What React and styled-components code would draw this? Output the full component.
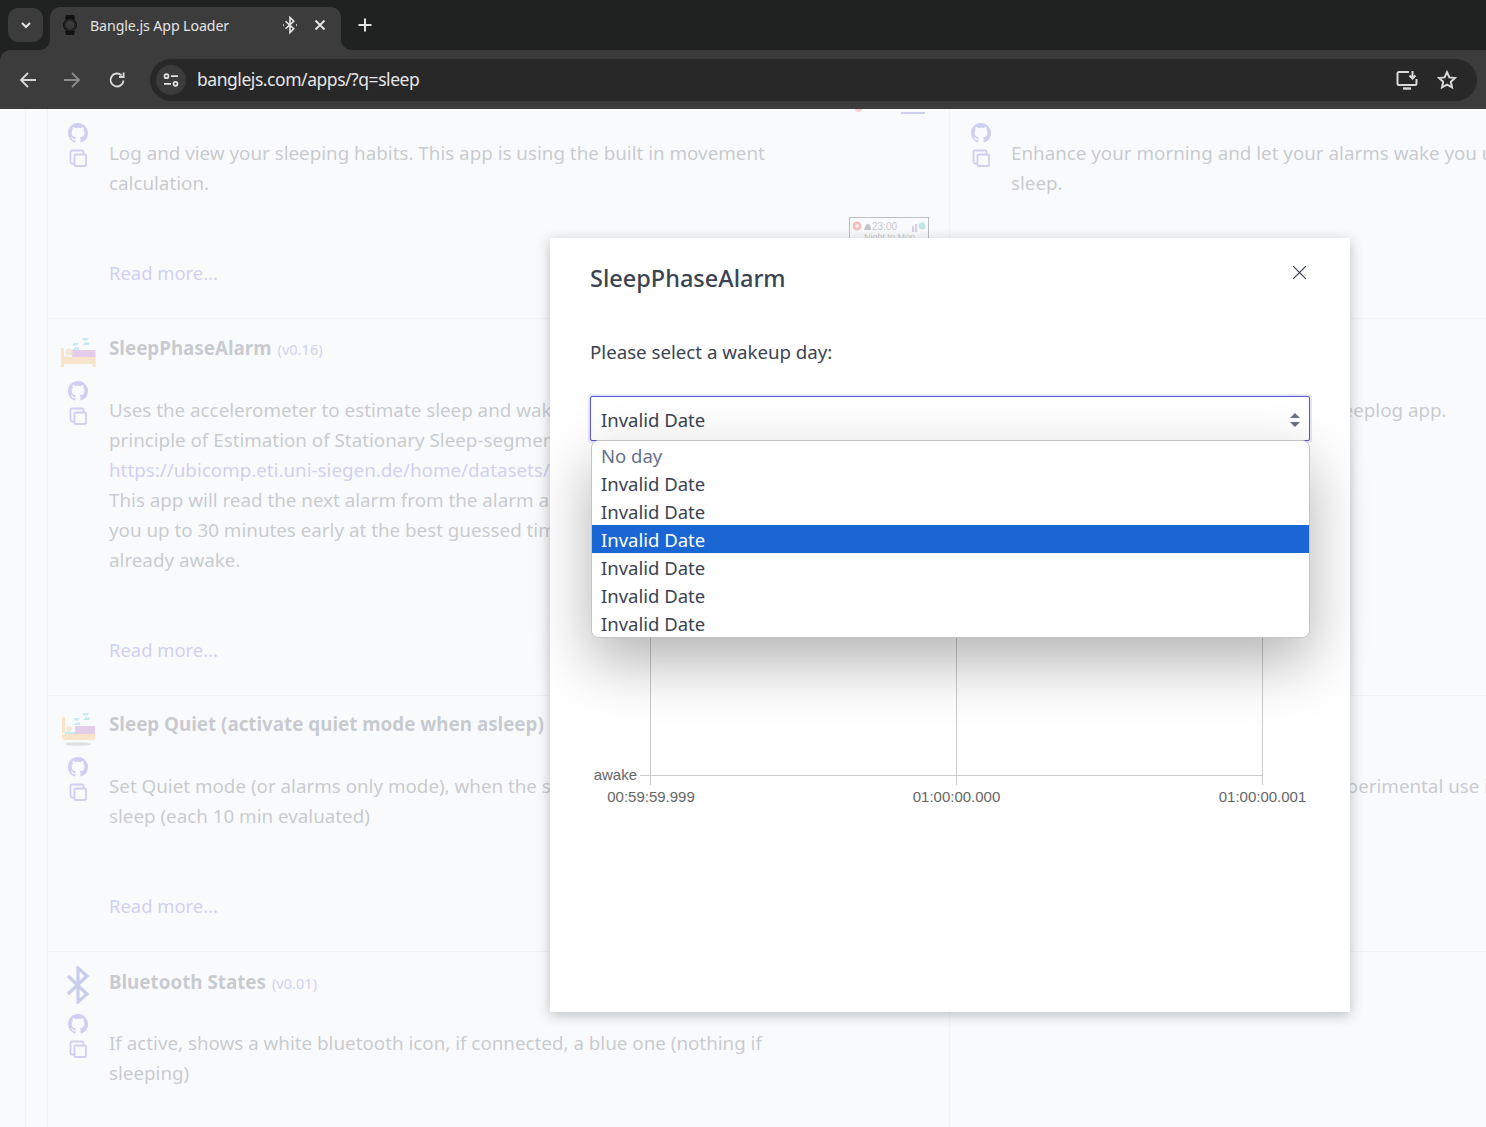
import React from "react";
import styled, { createGlobalStyle } from "styled-components";

const Global = createGlobalStyle`
  html, body { margin: 0; padding: 0; height: 100%; overflow: hidden; background: #fff; }
  * { box-sizing: border-box; }
`;
const Shell = styled.div`
  width: 1486px; height: 1127px; display: flex; flex-direction: column; overflow: hidden; position: relative;
  font-family: "Noto Sans", "Open Sans", sans-serif; color: #3b4351; background: #202222;
`;
const TabStrip = styled.div`
  height: 50px; background: #202222; display: flex; align-items: flex-end; padding-left: 8px; flex: none;
`;
const TabSearch = styled.button`
  width: 35px; height: 34px; margin: 0 7px 8px 0; border: 0; border-radius: 10px; background: #3c3c3c; color: #e6e6e6;
  display: flex; align-items: center; justify-content: center; padding: 0;
`;
const Tab = styled.div`
  position: relative; width: 291px; height: 43px; background: #3c3c3c; border-radius: 10px 10px 0 0; display: flex; align-items: center;
  padding: 0 15px 8px 12px; color: #e3e3e3; font-size: 14.2px;
  &::before, &::after { content: ""; position: absolute; bottom: 0; width: 10px; height: 10px; }
  &::before { right: 100%; background: radial-gradient(circle at 0 0, transparent 9.5px, #3c3c3c 10px); }
  &::after { left: 100%; background: radial-gradient(circle at 100% 0, transparent 9.5px, #3c3c3c 10px); }
`;
const TabTitle = styled.span`
  margin-left: 12px; padding-top: 2px; flex: 1; white-space: nowrap; letter-spacing: -0.1px;
`;
const TabAction = styled.span`
  display: flex; margin-left: ${p => p.$gap || 0}px;
`;
const NewTab = styled.span`
  margin: 0 0 8px 17px; display: flex; height: 34px; align-items: center; color: #e3e3e3;
`;
const Toolbar = styled.div`
  height: 59px; background: #3c3c3c; display: flex; align-items: center; padding: 0 9px 0 16px; flex: none;
  border-radius: 10px 0 0 0;
`;
const NavBtn = styled.span`
  width: 24px; height: 24px; display: flex; align-items: center; justify-content: center; margin-right: ${p => p.$mr}px; color: ${p => p.$dim ? "#8a8a8a" : "#d9d9d9"};
`;
const Omnibox = styled.div`
  flex: 1; height: 42px; border-radius: 21px; background: #282828; display: flex; align-items: center; padding: 0 20px 0 6px; margin-left: 21px;
`;
const SiteChip = styled.span`
  width: 30px; height: 30px; border-radius: 50%; background: #3c3c3c; display: flex; align-items: center; justify-content: center; color: #e3e3e3;
`;
const Url = styled.span`
  margin-left: 11px; padding-bottom: 2px; flex: 1; font-size: 17.5px; color: #e6e6e6; letter-spacing: -0.45px;
`;
const OmniIcon = styled.span`
  display: flex; color: #d9d9d9; margin-left: ${p => p.$ml || 0}px;
`;

const Page = styled.div`
  flex: 1; min-height: 0; background: #fff; overflow: hidden; padding-left: 25px; position: relative;
`;
const Rail = styled.div`
  border-left: 1px solid #dadee4; padding-left: 21px; height: 100%;
`;
const Grid = styled.div`
  width: 1600px; display: grid; grid-template-columns: 902px 1fr; border-left: 1px solid #dadee4;
`;
const Cell = styled.div`
  height: ${p => p.$h}px; border-bottom: 1px solid #dadee4; border-right: ${p => p.$end ? "none" : "1px solid #dadee4"};
  display: flex; padding: ${p => p.$top}px 0 0 ${p => p.$end ? 13 : 12}px; overflow: hidden;
`;
const IconCol = styled.div`
  width: 36px; flex: none; display: flex; flex-direction: column; align-items: center; color: #5755d9;
`;
const AppIcon = styled.span`
  height: 36px; margin-bottom: ${p => p.$mb || 10}px; display: flex; align-items: center; justify-content: center; color: ${p => p.$color || "inherit"};
`;
const IconLine = styled.span`
  display: flex; height: 24px; align-items: center; margin-top: ${p => p.$mt || 0}px;
`;
const Body = styled.div`
  margin-left: ${p => p.$ml || 13}px; font-size: 18.8px; line-height: 30px; flex: 1; white-space: nowrap;
`;
const Title = styled.div`
  font-weight: 700; font-size: 18.8px; line-height: 30px; height: 32px; margin-bottom: ${p => p.$mb || 30}px;
`;
const Version = styled.span`
  font-weight: 400; font-size: 14.6px; color: #5755d9; margin-left: 6px;
`;
const Desc = styled.div`
  height: ${p => p.$h}px; margin-top: ${p => p.$mt || 0}px;
`;
const Link = styled.span`
  color: #5755d9;
`;
const ReadMore = styled.span`
  color: #5755d9; font-size: 18.4px;
`;
const Overlay = styled.div`
  position: absolute; inset: 109px 0 0 0; background: rgba(247, 248, 249, 0.75);
`;
const Thumb = styled.div`
  position: absolute; left: 849px; top: 108px; width: 80px; height: 40px; border: 1px solid #111; background: #fff; color: #111;
  overflow: hidden;
`;
const ThumbArt = styled.svg`
  display: block; width: 78px; height: 38px; font-family: "Liberation Sans", sans-serif; font-size: 10px;
`;
const TopMark = styled.div`
  position: absolute; left: 901px; top: 3px; width: 24px; height: 2px; background: #5755d9;
`;
const TopDot = styled.div`
  position: absolute; left: 855px; top: -3px; width: 7px; height: 6px; border-radius: 50%; background: #e85a5a;
`;

const Modal = styled.div`
  position: absolute; left: 550px; top: 238px; width: 800px; height: 774px; background: #fff; box-shadow: 0 3px 12px rgba(48,55,66,.3);
  padding: 20px 40px 0;
`;
const ModalHead = styled.div`
  display: flex; justify-content: space-between; align-items: flex-start; height: 75px;
`;
const ModalTitle = styled.h2`
  margin: 0; font-size: 23.5px; line-height: 40px; font-weight: 500; color: #3b4351;
`;
const CloseBtn = styled.span`
  display: flex; color: #3b4351; margin: 5.5px 2.5px 0 0;
`;
const Prompt = styled.div`
  font-size: 18.7px; line-height: 28px; margin-top: 5px;
`;
const SelectBox = styled.div`
  margin-top: 30px; height: 45px; border: 1px solid #5755d9; box-shadow: 0 0 0 2px rgba(87,85,217,.15); border-radius: 2px;
  display: flex; align-items: center; justify-content: space-between; padding: 2px 8px 0 10px; font-size: 18.5px; background: #fff;
`;
const Popup = styled.div`
  position: absolute; left: 41px; top: 202px; width: 719px; height: 198px; background: #fff; border: 1px solid #c4c4c4; border-radius: 8px;
  box-shadow: 0 24px 60px 0 rgba(0,0,0,.3); overflow: hidden;
`;
const Option = styled.div`
  height: 28px; line-height: 30px; padding-left: 9px; font-size: 18.5px;
  background: ${p => p.$active ? "#1a66d4" : "#fff"}; color: ${p => p.$active ? "#fff" : p.$muted ? "#667189" : "#3b4351"};
`;
const Chart = styled.svg`
  position: absolute; left: 0; top: 0; width: 800px; height: 774px;
  font-family: "Liberation Sans", Arial, sans-serif; font-size: 15px; fill: #666;
`;

const ChevronDown = () => <svg width="14" height="14" viewBox="0 0 14 14" fill="none" stroke="currentColor" strokeWidth="2"><path d="M3 5l4 4 4-4" /></svg>;
const Watch = () => (
  <svg width="16" height="22" viewBox="0 0 16 22"><path d="M4 1h8l1 4H3zM3 17h10l-1 4H4z" fill="#111"/><circle cx="8" cy="11" r="6.5" fill="#222" stroke="#111"/><circle cx="8" cy="11" r="4.4" fill="#3a3a3a"/></svg>
);
const BT = ({ w = 24, h = 38, sw = 3.2 }) => (
  <svg width={w} height={h} viewBox="0 0 24 38" fill="none" stroke="currentColor" strokeWidth={sw}><path d="M2 10l19 18-9 8V2l9 8L2 28"/></svg>
);
const BTTab = () => (
  <svg width="18" height="18" viewBox="0 0 24 24" fill="none" stroke="#e3e3e3" strokeWidth="2.2"><path d="M6 7l11 10-5 5V2l5 5L6 17"/><path d="M3 12h1M20 12h1" strokeWidth="3"/></svg>
);
const XIcon = ({ size = 12, sw = 1.9 }) => <svg width={size} height={size} viewBox="0 0 12 12" fill="none" stroke="currentColor" strokeWidth={sw}><path d="M1.5 1.5l9 9M10.5 1.5l-9 9"/></svg>;
const Plus = () => <svg width="14" height="14" viewBox="0 0 14 14" fill="none" stroke="currentColor" strokeWidth="2"><path d="M7 .5v13M.5 7h13"/></svg>;
const Back = () => <svg width="18" height="18" viewBox="0 0 18 18" fill="none" stroke="currentColor" strokeWidth="1.9"><path d="M17 9H2M9 2L2 9l7 7"/></svg>;
const Fwd = () => <svg width="18" height="18" viewBox="0 0 18 18" fill="none" stroke="currentColor" strokeWidth="1.9"><path d="M1 9h15M9 2l7 7-7 7"/></svg>;
const Reload = () => <svg width="18" height="18" viewBox="0 0 18 18" fill="none" stroke="currentColor" strokeWidth="1.9"><path d="M15.5 9.5A6.5 6.5 0 1 1 13.6 4.4"/><path d="M15.6 1.4V6H11" /></svg>;
const Tune = () => (
  <svg width="16" height="14" viewBox="0 0 16 14" fill="none" stroke="currentColor" strokeWidth="1.7">
    <circle cx="3.5" cy="3.2" r="2" />
    <path d="M8 3.2h7M1 10.8h7" />
    <circle cx="12.5" cy="10.8" r="2" />
  </svg>
);
const Install = () => <svg width="22" height="20" viewBox="0 0 22 20" fill="none" stroke="currentColor" strokeWidth="2"><path d="M13 2H3a1.5 1.5 0 0 0-1.5 1.5v10A1.5 1.5 0 0 0 3 15h16a1.5 1.5 0 0 0 1.5-1.5V9"/><path d="M7 18.5h8" strokeWidth="2.4"/><path d="M16.5 1v7M13.5 5.5l3 3 3-3"/></svg>;
const Star = () => <svg width="20" height="20" viewBox="0 0 20 20" fill="none" stroke="currentColor" strokeWidth="2"><path d="M10 2.2l2.4 5.2 5.6.6-4.2 3.8 1.2 5.6L10 14.6l-5 2.8 1.2-5.6L2 8l5.600-.6z"/></svg>;
const Copy = () => <svg width="18" height="18" viewBox="0 0 18 18" fill="none" stroke="currentColor" strokeWidth="1.8"><path d="M5 14.5H2.900A1.5 1.5 0 0 1 1.5 13V3A1.5 1.5 0 0 1 3 1.5h10a1.5 1.5 0 0 1 1.5 1.5v2"/><rect x="5.5" y="5.5" width="11.5" height="11.5" rx="1"/></svg>;
const GitHub = () => (
  <svg width="20" height="20" viewBox="0 0 16 16" fill="currentColor">
    <path d="M8 0C3.58 0 0 3.58 0 8c0 3.54 2.29 6.53 5.47 7.59.4.07.55-.17.55-.38 0-.19-.01-.82-.01-1.49-2.01.37-2.53-.49-2.69-.94-.09-.23-.48-.94-.82-1.13-.28-.15-.68-.52-.01-.53.63-.01 1.08.58 1.23.82.72 1.21 1.87.87 2.33.66.07-.52.28-.87.51-1.07-1.78-.2-3.64-.89-3.64-3.95 0-.87.31-1.59.82-2.15-.08-.2-.36-1.02.08-2.12 0 0 .67-.21 2.2.82.64-.18 1.32-.27 2-.27.68 0 1.36.09 2 .27 1.53-1.04 2.2-.82 2.2-.82.44 1.1.16 1.92.08 2.12.51.56.82 1.27.82 2.15 0 3.07-1.87 3.75-3.65 3.95.29.25.54.73.54 1.48 0 1.07-.01 1.93-.01 2.2 0 .21.15.46.55.38A8.013 8.013 0 0016 8c0-4.42-3.58-8-8-8z"/>
  </svg>
);
const Bed = () => (
  <svg width="36" height="34" viewBox="0 0 36 34">
    <path d="M1 14h3v8h31.5v11h-3v-3H4v3H1z" fill="#f5a83f"/>
    <rect x="12" y="16" width="23.5" height="7" fill="#a64dbd"/>
    <circle cx="9" cy="18" r="3.6" fill="#f0b272"/>
    <path d="M4 21.5h8V23H4z" fill="#e6e6e6"/>
    <path d="M13 9h6l-4 4.5h4V16h-6.5l4-4.5H13zM22.5 4h6.5l-4 4.500h4V11h-6.5l4-4.500h-4z" fill="#33c0e8"/>
  </svg>
);
const BedQuiet = () => (
  <svg width="36" height="40" viewBox="0 0 36 40">
    <path d="M2 11a1.5 1.5 0 0 1 3 0v15H2z" fill="#f5a83f"/>
    <path d="M2 27h33v3a3 3 0 0 1-3 3H5a3 3 0 0 1-3-3z" fill="#f5a83f"/>
    <rect x="15" y="19" width="20" height="8" fill="#a64dbd"/>
    <circle cx="9" cy="22" r="3" fill="#f0b272"/>
    <path d="M5 25h10v2H5z" fill="#33c0e8"/>
    <path d="M14 11h6l-4 4.5h4V18h-6.5l4-4.5H14zM23 6h6.5l-4 4.5h4V13H23l4-4.5h-4z" fill="#33c0e8"/>
    <ellipse cx="18" cy="37" rx="13" ry="1.8" fill="#999"/>
  </svg>
);

const Sym = () => (
  <>
    <IconLine><GitHub /></IconLine>
    <IconLine $mt={1}><Copy /></IconLine>
  </>
);

const lines = (arr) => arr.map((l, i) => <React.Fragment key={i}>{l}<br /></React.Fragment>);

export default function App() {
  return (
    <Shell>
      <Global />
      <TabStrip>
        <TabSearch><ChevronDown /></TabSearch>
        <Tab>
          <Watch />
          <TabTitle>Bangle.js App Loader</TabTitle>
          <TabAction><BTTab /></TabAction>
          <TabAction $gap={15}><XIcon /></TabAction>
        </Tab>
        <NewTab><Plus /></NewTab>
      </TabStrip>
      <Toolbar>
        <NavBtn $mr={20}><Back /></NavBtn>
        <NavBtn $mr={21} $dim><Fwd /></NavBtn>
        <NavBtn $mr={0}><Reload /></NavBtn>
        <Omnibox>
          <SiteChip><Tune /></SiteChip>
          <Url>banglejs.com/apps/?q=sleep</Url>
          <OmniIcon><Install /></OmniIcon>
          <OmniIcon $ml={19}><Star /></OmniIcon>
        </Omnibox>
      </Toolbar>
      <Page>
        <Rail>
          <Grid>
            <Cell $h={210} $top={12}>
              <IconCol><Sym /></IconCol>
              <Body>
                <Desc $h={120} $mt={17}>{lines(["Log and view your sleeping habits. This app is using the built in movement", "calculation."])}</Desc>
                <ReadMore>Read more...</ReadMore>
              </Body>
            </Cell>
            <Cell $h={210} $top={12} $end>
              <IconCol><Sym /></IconCol>
              <Body $ml={12}>
                <Desc $h={120} $mt={17}>{lines(["Enhance your morning and let your alarms wake you up", "sleep."])}</Desc>
              </Body>
            </Cell>
            <Cell $h={377} $top={14}>
              <IconCol>
                <AppIcon><Bed /></AppIcon>
                <Sym />
              </IconCol>
              <Body>
                <Title>SleepPhaseAlarm<Version>(v0.16)</Version></Title>
                <Desc $h={240}>{lines([
                  "Uses the accelerometer to estimate sleep and wake states with the",
                  "principle of Estimation of Stationary Sleep-segments (ESS, see",
                  <Link key="l">https://ubicomp.eti.uni-siegen.de/home/datasets/ichi14/</Link>,
                  "This app will read the next alarm from the alarm application and will wake",
                  "you up to 30 minutes early at the best guessed time when you are",
                  "already awake.",
                ])}</Desc>
                <ReadMore>Read more...</ReadMore>
              </Body>
            </Cell>
            <Cell $h={377} $top={14} $end>
              <IconCol><Sym /></IconCol>
              <Body $ml={12}>
                <Desc $h={224} $mt={62}>Also shows the sleep state from the sleeplog app.</Desc>
              </Body>
            </Cell>
            <Cell $h={256} $top={13}>
              <IconCol>
                <AppIcon><BedQuiet /></AppIcon>
                <Sym />
              </IconCol>
              <Body>
                <Title>Sleep Quiet (activate quiet mode when asleep)</Title>
                <Desc $h={120}>{lines(["Set Quiet mode (or alarms only mode), when the sleep detection says you", "sleep (each 10 min evaluated)"])}</Desc>
                <ReadMore>Read more...</ReadMore>
              </Body>
            </Cell>
            <Cell $h={256} $top={13} $end>
              <IconCol><Sym /></IconCol>
              <Body $ml={12}>
                <Desc $h={103} $mt={62}>A sleep log tracker, for now only for experimental use in this app</Desc>
              </Body>
            </Cell>
            <Cell $h={200} $top={15}>
              <IconCol>
                <AppIcon $color="#3a4fc0" $mb={9}><BT /></AppIcon>
                <Sym />
              </IconCol>
              <Body>
                <Title $mb={29}>Bluetooth States<Version>(v0.01)</Version></Title>
                <Desc $h={90}>{lines(["If active, shows a white bluetooth icon, if connected, a blue one (nothing if", "sleeping)"])}</Desc>
              </Body>
            </Cell>
            <Cell $h={200} $top={15} $end />
          </Grid>
        </Rail>
        <TopDot />
        <TopMark />
        <Thumb>
          <ThumbArt viewBox="0 0 78 38">
            <circle cx="7" cy="8" r="4.5" fill="#e02020"/>
            <path d="M5 8h4M7 6v4" stroke="#fff" strokeWidth="1.2"/>
            <path d="M14 12c1-1 1-5 3-6s4 1 4 6z" fill="#333"/>
            <text x="22" y="12" fill="#333">23:00</text>
            <path d="M62 8v6h2V8zM65 6v8h2V6z" fill="#7a5cc0"/>
            <circle cx="72" cy="8" r="3.5" fill="#20b0b0"/>
            <text x="14" y="22" fill="#333" fontSize="9">Night to Mon</text>
          </ThumbArt>
        </Thumb>
      </Page>
      <Overlay />
      <Modal>
        <Chart viewBox="0 0 800 774">
          <g stroke="#ccc" fill="none">
            <path d="M100.5 400V547M406.5 400V547M712.5 400V547" />
            <path d="M90 537.5H712.5" />
          </g>
          <text x="87" y="542" textAnchor="end">awake</text>
          <text x="101" y="564" textAnchor="middle">00:59:59.999</text>
          <text x="406.5" y="564" textAnchor="middle">01:00:00.000</text>
          <text x="712.5" y="564" textAnchor="middle">01:00:00.001</text>
        </Chart>
        <ModalHead>
          <ModalTitle>SleepPhaseAlarm</ModalTitle>
          <CloseBtn><XIcon size={17} sw={0.9} /></CloseBtn>
        </ModalHead>
        <Prompt>Please select a wakeup day:</Prompt>
        <SelectBox>
          <span>Invalid Date</span>
          <svg width="12" height="16" viewBox="0 0 12 16" fill="#667189"><path d="M6 1l5 5H1zM6 15l5-5H1z"/></svg>
        </SelectBox>
        <Popup>
          <Option $muted>No day</Option>
          <Option>Invalid Date</Option>
          <Option>Invalid Date</Option>
          <Option $active>Invalid Date</Option>
          <Option>Invalid Date</Option>
          <Option>Invalid Date</Option>
          <Option>Invalid Date</Option>
        </Popup>
      </Modal>
    </Shell>
  );
}
